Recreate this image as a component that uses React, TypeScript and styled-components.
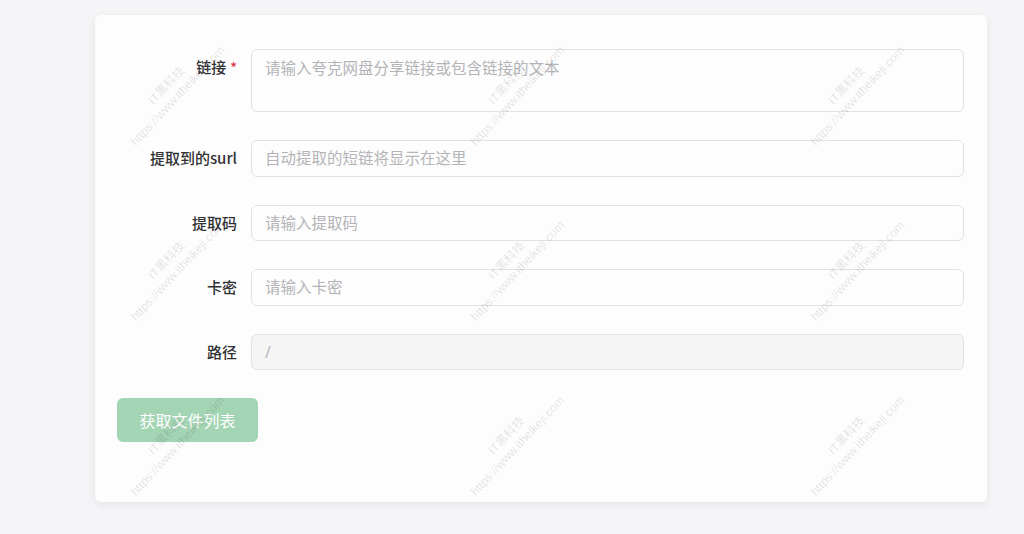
import styled, { createGlobalStyle } from "styled-components";

const GlobalStyle = createGlobalStyle`
  html, body {
    margin: 0;
    padding: 0;
    background: #f5f5f7;
    font-family: "Noto Sans", "Noto Sans CJK SC", sans-serif;
  }
`;

const fields = [
  { label: "提取到的surl", placeholder: "自动提取的短链将显示在这里" },
  { label: "提取码", placeholder: "请输入提取码" },
  { label: "卡密", placeholder: "请输入卡密" },
];

export default () => (
  <Page>
    <GlobalStyle />
    <Card>
      <FormRow>
        <Label>
          链接<Required>*</Required>
        </Label>
        <TextArea placeholder="请输入夸克网盘分享链接或包含链接的文本" />
      </FormRow>
      {fields.map((f) => (
        <FormRow key={f.label}>
          <Label>{f.label}</Label>
          <Input type="text" placeholder={f.placeholder} />
        </FormRow>
      ))}
      <FormRow>
        <Label>路径</Label>
        <Input type="text" placeholder="/" disabled />
      </FormRow>
      <SubmitButton disabled>获取文件列表</SubmitButton>
    </Card>
    <Watermarks>
      {Array.from({ length: 9 }).map((_, i) => (
        <MarkCell key={i}>
          <Mark>
            <div>IT黑科技</div>
            <div>https://www.itheikeji.com</div>
          </Mark>
        </MarkCell>
      ))}
    </Watermarks>
  </Page>
);

const Page = styled.div`
  position: relative;
  width: 1024px;
  height: 534px;
  padding: 15px 0 0 95px;
  box-sizing: border-box;
  overflow: hidden;
`;

const Card = styled.div`
  width: 892px;
  height: 487px;
  box-sizing: border-box;
  background: #fdfdfd;
  border-radius: 6px;
  box-shadow: 0 2px 8px rgba(0, 0, 0, 0.08);
  padding: 34px 23px 0 22px;
  display: flex;
  flex-direction: column;
  gap: 28px;
`;

const FormRow = styled.div`
  display: flex;
  align-items: flex-start;
`;

const Label = styled.label`
  width: 120px;
  flex-shrink: 0;
  margin-right: 14px;
  text-align: right;
  font-family: "Noto Sans CJK SC", sans-serif;
  font-size: 15px;
  font-weight: 500;
  color: #303133;
  line-height: 36.5px;
  white-space: nowrap;
`;

const Required = styled.span`
  color: #e0334a;
  margin-left: 4px;
  font-size: 14px;
`;

const fieldBase = `
  flex: 1;
  box-sizing: border-box;
  border: 1px solid #e2e2e6;
  border-radius: 6px;
  background: #fdfdfd;
  font-family: "Noto Sans", "Noto Sans CJK SC", sans-serif;
  font-size: 15.5px;
  color: #333;
  padding: 0 13px;
  outline: none;
  &::placeholder {
    color: #b4b4b8;
  }
`;

const TextArea = styled.textarea`
  ${fieldBase}
  height: 63px;
  padding-top: 7px;
  line-height: 22px;
  resize: none;
`;

const Input = styled.input`
  ${fieldBase}
  height: 36.5px;
  &:disabled {
    background: #f5f5f6;
  }
`;

const SubmitButton = styled.button`
  align-self: flex-start;
  width: 141px;
  height: 44px;
  border: none;
  border-radius: 6px;
  background: #a3d4b3;
  color: #fff;
  font-family: "Noto Sans", "Noto Sans CJK SC", sans-serif;
  font-size: 16px;
  cursor: not-allowed;
`;

const Watermarks = styled.div`
  position: absolute;
  top: 3px;
  left: 2px;
  display: grid;
  grid-template-columns: repeat(3, 340px);
  grid-template-rows: repeat(3, 175px);
  pointer-events: none;
`;

const MarkCell = styled.div`
  display: flex;
  align-items: center;
  justify-content: center;
`;

const Mark = styled.div`
  transform: rotate(-47deg);
  text-align: center;
  font-family: "Liberation Sans", "Noto Sans CJK SC", sans-serif;
  font-size: 12px;
  line-height: 15px;
  color: rgba(0, 0, 0, 0.12);
  white-space: nowrap;
`;
